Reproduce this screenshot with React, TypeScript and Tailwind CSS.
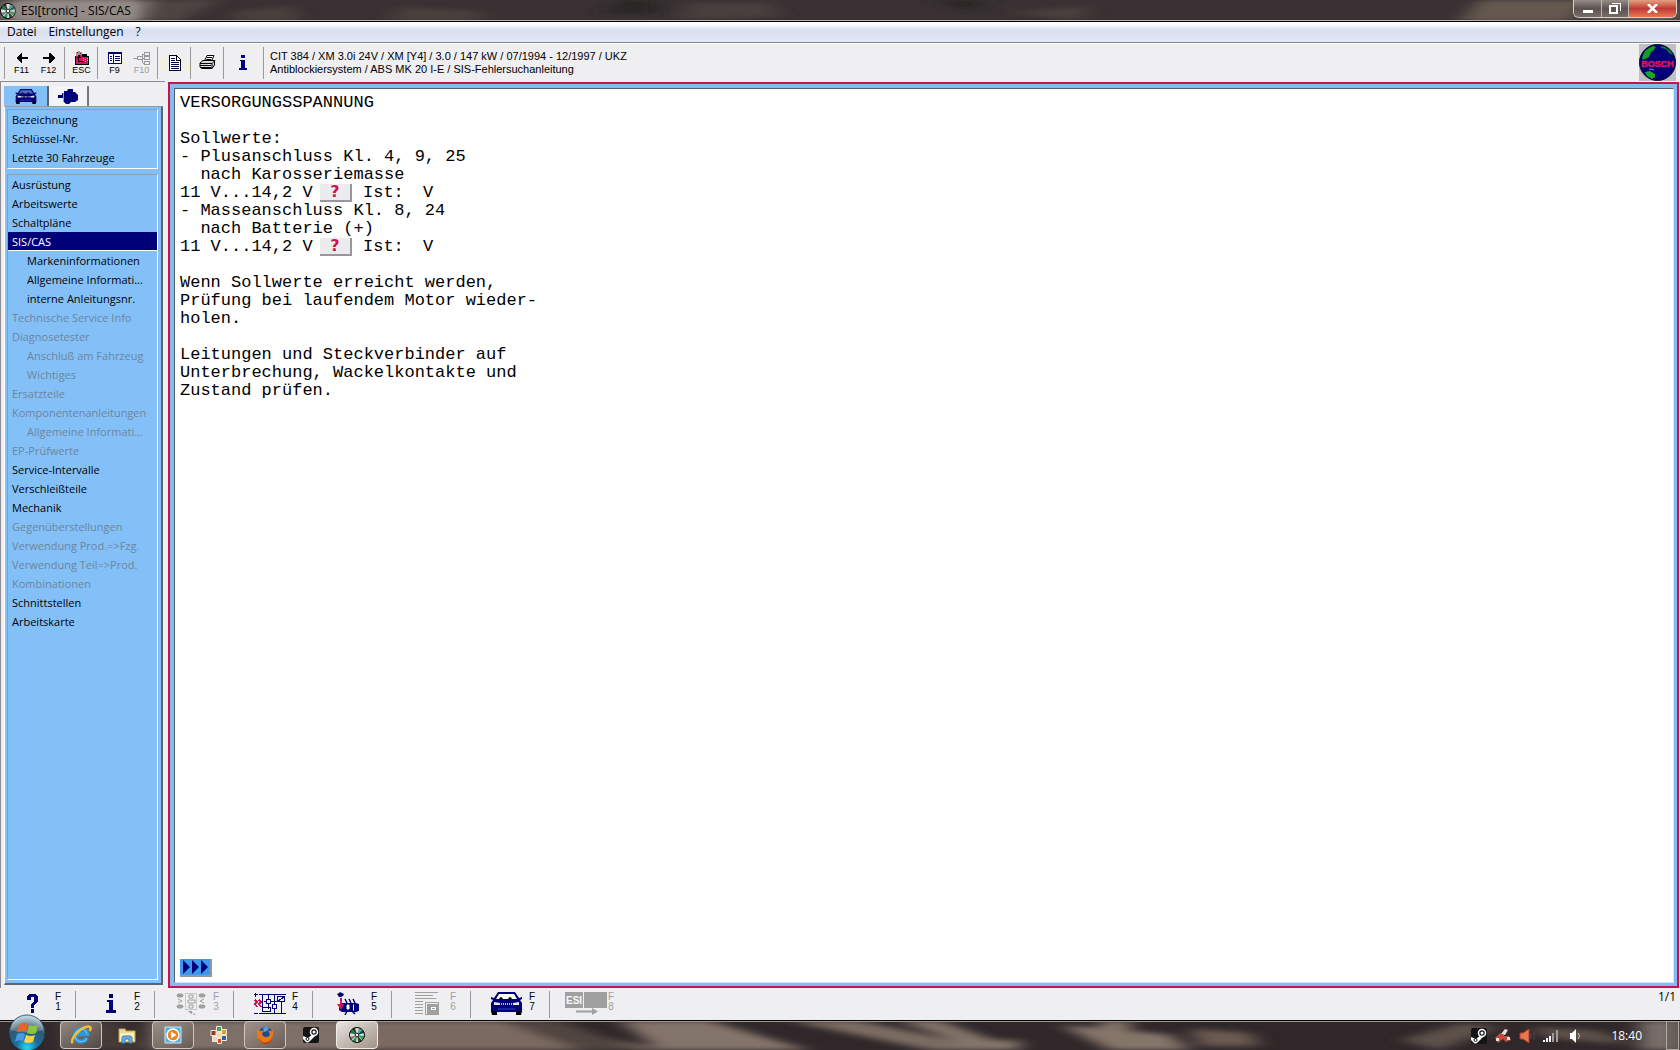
import React from 'react';

const UI_FONT = "font-['Open_Sans','Noto_Sans',sans-serif]";

type NavItem = { label: string; sub?: boolean; disabled?: boolean; active?: boolean };

const VEHICLE_ITEMS: NavItem[] = [
  { label: 'Bezeichnung' },
  { label: 'Schlüssel-Nr.' },
  { label: 'Letzte 30 Fahrzeuge' },
];

const INFO_ITEMS: NavItem[] = [
  { label: 'Ausrüstung' },
  { label: 'Arbeitswerte' },
  { label: 'Schaltpläne' },
  { label: 'SIS/CAS', active: true },
  { label: 'Markeninformationen', sub: true },
  { label: 'Allgemeine Informati...', sub: true },
  { label: 'interne Anleitungsnr.', sub: true },
  { label: 'Technische Service Info', disabled: true },
  { label: 'Diagnosetester', disabled: true },
  { label: 'Anschluß am Fahrzeug', sub: true, disabled: true },
  { label: 'Wichtiges', sub: true, disabled: true },
  { label: 'Ersatzteile', disabled: true },
  { label: 'Komponentenanleitungen', disabled: true },
  { label: 'Allgemeine Informati...', sub: true, disabled: true },
  { label: 'EP-Prüfwerte', disabled: true },
  { label: 'Service-Intervalle' },
  { label: 'Verschleißteile' },
  { label: 'Mechanik' },
  { label: 'Gegenüberstellungen', disabled: true },
  { label: 'Verwendung Prod.=>Fzg.', disabled: true },
  { label: 'Verwendung Teil=>Prod.', disabled: true },
  { label: 'Kombinationen', disabled: true },
  { label: 'Schnittstellen' },
  { label: 'Arbeitskarte' },
];

/* ---------- Icons ---------- */

const DiscIcon = () => (
  <svg width="16" height="16" viewBox="0 0 16 16">
    <circle cx="8" cy="8" r="7.5" fill="#e4e4dc" />
    <path d="M8 8 .8 6A7.500 7.500 0 0 1 3 2.400z" fill="#1a7a48" />
    <path d="M8 8 3 2.400A7.500 7.500 0 0 1 6 .8z" fill="#303838" />
    <path d="M8 8 10 .8A7.500 7.500 0 0 1 13.500 3z" fill="#48b070" />
    <path d="M8 8 13.500 3A7.500 7.500 0 0 1 15.200 6z" fill="#183c70" />
    <path d="M8 8 15.400 9A7.500 7.500 0 0 1 13.600 13z" fill="#28a860" />
    <path d="M8 8 13 13.600A7.500 7.500 0 0 1 9.500 15.300z" fill="#383838" />
    <path d="M8 8 7 15.400A7.500 7.500 0 0 1 3.500 14z" fill="#1c9450" />
    <path d="M8 8 2.600 13A7.500 7.500 0 0 1 .8 10z" fill="#787c80" />
    <circle cx="8" cy="8" r="7.500" fill="none" stroke="#000" />
    <circle cx="8" cy="8" r="1.800" fill="#fff" stroke="#222" />
  </svg>
);

const ArrowIcon = ({ flip = false }: { flip?: boolean }) => (
  <svg width="12" height="10" viewBox="0 0 12 10" shapeRendering="crispEdges" className={flip ? '-scale-x-100' : ''}>
    <path d="M0 5 5 0H6V4H12V6H6V10H5z" fill="#000" />
  </svg>
);

const EscIcon = () => (
  <svg width="16" height="15" viewBox="0 0 16 15" shapeRendering="crispEdges">
    <path d="M1 5h14v9H1z" fill="#000" />
    <path d="M2 4h6v2h6v7H2z" fill="#d01860" />
    <path d="M8 3h5v2H8z" fill="#000" />
    <path d="M2 1h2V0h2v1h2v3H6v2H4V5H2z" fill="#b09090" />
    <path d="M3 1h1v1H3zM6 2h1v1H6zM4 4h1v1H4z" fill="#401020" />
    <path d="M5 4h1v2h1v1H5v3h5v1H4V7H3V6h1V5h1z" fill="#000" />
    <path d="M9 7h1v1H9zM11 8h1v1h-1zM9 9h1v1H9zM11 10h1v1h-1zM13 7h1v1h-1zM13 9h1v1h-1z" fill="#f0a0c0" />
  </svg>
);

const ListIcon = () => (
  <svg width="14" height="12" viewBox="0 0 14 12" shapeRendering="crispEdges">
    <path d="M0 0h14v12H0z" fill="#000070" />
    <path d="M1 2h4v9H1zM6 2h7v9H6z" fill="#fff" />
    <path d="M2 4h2v1H2zM2 6h2v1H2zM2 8h2v1H2zM7 4h5v1H7zM7 6h5v1H7zM7 8h5v1H7z" fill="#000070" />
  </svg>
);

const TreeIcon = () => (
  <svg width="17" height="13" viewBox="0 0 17 13" shapeRendering="crispEdges" fill="none" stroke="#9a9a9a">
    <path d="M0 6.5h5M9 6.5h3M9.5 2v9M9.5 2H12M9.5 11H12" />
    <path d="M4.5 4.5h5v3h-5zM11.5.5h5v3h-5zM11.5 4.5h5v3h-5zM11.5 9.5h5v3h-5z" />
  </svg>
);

const DocIcon = () => (
  <svg width="12" height="16" viewBox="0 0 12 16" shapeRendering="crispEdges">
    <path d="M.5.5h7l4 4v11H.5z" fill="#fff" stroke="#000" />
    <path d="M7 0v5h5" fill="none" stroke="#000" />
    <path d="M2 3h4v1H2zM2 5h4v1H2zM2 7h8v1H2zM2 9h8v1H2zM2 11h8v1H2zM2 13h8v1H2z" fill="#000050" />
  </svg>
);

const PrinterIcon = () => (
  <svg width="17" height="15" viewBox="0 0 17 15">
    <path d="M5.5 6 8 .5h7L12.500 6" fill="#fff" stroke="#000" />
    <path d="M8 2.500h5M7.200 4.500h5" stroke="#000" />
    <path d="M1 8 4 5.500h11.500v4.500L13 13.500H2.500L1 12z" fill="#d8d8d8" stroke="#000" />
    <path d="M1 8.500h12l3-3M13 8.500v5" stroke="#000" fill="none" />
    <path d="M1 10.500h11M2 12.500h10" stroke="#000" />
    <path d="M9 9.500h2" stroke="#fff" />
  </svg>
);

const InfoIcon = ({ big = false }: { big?: boolean }) => (
  <svg width={big ? 11 : 9} height={big ? 19 : 15} viewBox="0 0 11 19" preserveAspectRatio="none" shapeRendering="crispEdges" fill="#000078">
    <path d="M3 0h4v4H3zM1 6h6v10h3v3H0v-3h3V8H1z" />
  </svg>
);

const QuestionIcon = () => (
  <svg width="11" height="19" viewBox="0 0 11 19" shapeRendering="crispEdges" fill="#000078">
    <path d="M2 0h7v1h1v1h1v6h-1v1H9v1H8v1H7v3H4v-4h1V9h1V8h1V3H4v3H0V2h1V1h1zM4 15h3v4H4z" />
  </svg>
);

const CarIcon = ({ large = false }: { large?: boolean }) => (
  <svg width={large ? 33 : 22} height={large ? 23 : 15} viewBox="0 0 33 23" preserveAspectRatio="none">
    <path d="M8 0h17l4 6 3-1v2l-2 1 2 3v9H1v-9l2-3-2-1V5l3 1z" fill="#000078" />
    <path d="M9 2h15l3 5H6z" fill={large ? '#fff' : '#4a70c0'} />
    <path d="M9 7q2-4 4 0M18 7q2-4 4 0" fill="#000" />
    <path d="M4 10l6 1v2H4zM29 10l-6 1v2h6z" fill="#e8e8d8" />
    <path d="M11 12h11" stroke="#fff" strokeWidth="1.500" strokeDasharray="1 1" />
    <path d="M8 17h17" stroke="#3048a8" />
    <path d="M1 19h6v4H2zM26 19h6l-1 4h-5z" fill="#000" />
  </svg>
);

const PlugIcon = () => (
  <svg width="20" height="15" viewBox="0 0 20 15">
    <path d="M0 6h4V4h2V2h3l1-2h5v3h2l3 3v5l-3 2h-4l-2 2H8l-2-2H5V9H0z" fill="#000078" />
    <path d="M5.500 4v9" stroke="#7da0e0" />
  </svg>
);

const DiagramIcon = () => (
  <svg width="30" height="22" viewBox="0 0 30 22" fill="#a0a0a0">
    <path d="M1 2l1-1h4l1 1v1l-1 1H2L1 3zM1 13l1-1h4l1 1v1l-1 1H2l-1-1zM23 2l1-1h4l1 1v1l-1 1h-4l-1-1zM23 13l1-1h4l1 1v1l-1 1h-4l-1-1z" stroke="#a0a0a0" />
    <path d="M2 6l4 2-4 2M28 6l-4 2 4 2" fill="none" stroke="#a0a0a0" />
    <path d="M9.500.5h11v16h-11z" fill="none" stroke="#a0a0a0" strokeDasharray="1 1" />
    <path d="M13 2h4v3h-4zM12 7h7v3h-7zM13 12h4v3h-4z" fill="none" stroke="#a0a0a0" />
    <path d="M12 18h4v3l-2-1zM16 19l4 3h-2z" />
  </svg>
);

const CircuitIcon = () => (
  <svg width="32" height="22" viewBox="0 0 32 22" shapeRendering="crispEdges" fill="none" stroke="#000078">
    <path d="M5 1.500h27M5 20.500h27M8.500 2v12M14.500 2v5M14.500 11v5M20.500 2v10M20.500 15v5M27.500 8v12M10 8.500h2M17 8.500h8" />
    <path d="M12.500 6.500h4v4h-4zM23.500 3.500h7v5h-7zM8.500 14.500h8v4h-8zM18.500 11.500h4v4h-4zM24 8l6-4" />
    <path d="M0 1.500h4M1.500 0v4M0 20.500h4" />
    <path d="M1 7l2 2-2 2 2 3M5 7l2 2-2 2 2 3" stroke="#c81450" strokeWidth="1.500" />
  </svg>
);

const SensorIcon = () => (
  <svg width="23" height="23" viewBox="0 0 23 23">
    <path d="M0 2l2-1 1-1 2 1 2 1-1 2-2 1H2z" fill="#000078" />
    <path d="M2 13l3-2h14l3 1v7l-3 1H5l-3-2z" fill="#000078" />
    <path d="M3 6h2v6h2l-3 6-4-6h3z" fill="#d0145a" />
    <path d="M10 13h2v4h-2zM16.500 12.500v6" fill="#fff" stroke="#fff" />
    <path d="M10 11 8 7M14 11l-2-4M18 11l-2-4M10 19l-2 4M15 19l3 3" stroke="#000078" strokeWidth="1.500" />
  </svg>
);

const TextBlockIcon = () => (
  <svg width="25" height="24" viewBox="0 0 25 24" shapeRendering="crispEdges" stroke="#a0a0a0" fill="none">
    <path d="M0 .5h23M0 3.500h18M0 6.500h21M0 9.500h8M0 12.500h8M0 15.500h8M0 18.500h8M0 21.500h8" />
    <path d="M10.500 10.500h13v12h-13z" />
    <path d="M12 12h11v9H12z" fill="#a0a0a0" />
    <path d="M16 15.500h4v2h-4z" stroke="#fff" />
  </svg>
);

const EsiIcon = () => (
  <svg width="42" height="23" viewBox="0 0 42 23" className="shrink-0">
    <path d="M0 0h42v16H0z" fill="#a0a0a0" />
    <text x="1" y="12" fontFamily="Liberation Sans, sans-serif" fontSize="10" fontWeight="700" fill="#f8f8f8">ESI</text>
    <path d="M18.500 0v16" stroke="#f0f0f0" />
    <path d="M11 18.500h16v-2.500l6 3.500-6 3.500v-2.500H11z" fill="#a0a0a0" />
  </svg>
);

const GlobeLogo = () => (
  <svg width="37" height="37" viewBox="0 0 37 37" className="bg-[#c0c0c4]">
    <circle cx="18.500" cy="18.500" r="18" fill="#000078" stroke="#101020" />
    <path d="M3 14Q5 5 14 2l3 1-3 4-2 1-2 5-6 3z" fill="#10a020" />
    <path d="M22 2q9 2 12 9l-4-2-3-4-5-1z" fill="#0a8030" />
    <path d="M6 28l5-1 5 3v3l-3 2-5-3z" fill="#18a828" />
    <path d="M10 25l5 1" stroke="#30b0e0" />
    <text x="18.500" y="23" textAnchor="middle" fontFamily="Liberation Sans, sans-serif" fontSize="9" fontWeight="700" fill="#d01860" stroke="#d01860" strokeWidth=".6">BOSCH</text>
  </svg>
);

const StartOrb = () => (
  <svg width="38" height="36" viewBox="0 0 38 36">
    <defs>
      <radialGradient id="orb" cx="50%" cy="90%" r="85%">
        <stop offset="0" stopColor="#20d8f8" />
        <stop offset=".35" stopColor="#1a6f9c" />
        <stop offset=".7" stopColor="#34566c" />
        <stop offset="1" stopColor="#a8c8d4" />
      </radialGradient>
    </defs>
    <circle cx="19" cy="19" r="18" fill="url(#orb)" stroke="#1c3644" />
    <path d="M3 16a16 16 0 0 1 32 0q-16 5-32 0z" fill="#fff" opacity=".22" />
    <path d="M11 11q4-4 9-1l-2 8q-4-2-9 0z" fill="#e8622c" />
    <path d="M21 11q4 2 9 0l-2 8q-4 2-9 0z" fill="#8cc43c" />
    <path d="M9 20q4-2 8 0l-2 7q-4-2-8 1z" fill="#4a9ae0" />
    <path d="M18 21q5 2 9 0l-2 7q-5 2-9 0z" fill="#fbd040" />
  </svg>
);

const IeIcon = () => (
  <svg width="24" height="20" viewBox="0 0 26 24" fill="none">
    <path d="M20 15.500A7.500 7.500 0 1 1 20.500 11H8" stroke="#2c98e0" strokeWidth="5" />
    <path d="M20 15.500A7.500 7.500 0 1 1 20.500 11" stroke="#8cd8ff" strokeWidth="1" />
    <path d="M3 22C-1 17 14 1 23 2c3 1 1 4 0 5" stroke="#f4c030" strokeWidth="3" />
  </svg>
);

const FolderIcon = () => (
  <svg width="18" height="17" viewBox="0 0 18 17">
    <path d="M1 2h6l1 2h9v11H1z" fill="#f0d890" stroke="#c8a850" />
    <path d="M2 6h14v8H2z" fill="#fbf0c0" />
    <path d="M4 16v-5q0-2 2-2h6q2 0 2 2v5h-3v-4H7v4z" fill="#68b0e4" stroke="#3880b8" />
  </svg>
);

const PlayerIcon = () => (
  <svg width="18" height="18" viewBox="0 0 18 18">
    <path d="M1 1h16v16H1z" fill="#5aaee0" stroke="#c8e8fc" />
    <circle cx="9" cy="9" r="6" fill="#f08020" stroke="#fff" strokeWidth="1.500" />
    <path d="M7 5.500 12.500 9 7 12.500z" fill="#fff" />
  </svg>
);

const TilesIcon = () => (
  <svg width="18" height="18" viewBox="0 0 18 18" stroke="#f0e8d8">
    <path d="M6.500.5h5v5h-5z" fill="#4c9c5c" />
    <path d="M1 4.500h5v5H1z" fill="#b03020" />
    <path d="M11.500 3.500h5v5h-5z" fill="#e0a030" />
    <path d="M6.500 6.500h5v5h-5z" fill="#f4dca0" />
    <path d="M2.500 10.500h5v5h-5z" fill="#e8d8c8" />
    <path d="M11.500 9.500h5v5h-5z" fill="#3060a0" />
    <path d="M7.500 12.500h4v5h-4z" fill="#d05030" />
  </svg>
);

const FoxIcon = () => (
  <svg width="18" height="18" viewBox="0 0 18 18">
    <circle cx="9.500" cy="8" r="7" fill="#1c4c90" />
    <path d="M7 2q3-2 6 0l-2 3-3 1z" fill="#58a0e0" />
    <path d="M1 3l3 2q2-1 4 0-1 2-2 2 0 4 4 4 3 0 4-2-1-3-2-5 4 2 5 0 1 13-8 13.500Q0 18 1 3z" fill="#e87818" />
    <path d="M2 11q3 6 8 5.500 5-1 6.500-6-1 8-7.500 7.500Q4 18 2 11z" fill="#c03c10" />
  </svg>
);

const SteamIcon = () => (
  <svg width="16" height="16" viewBox="0 0 16 16">
    <rect width="16" height="16" rx="2" fill="#141414" />
    <path d="M0 9l5 2 5-4 3 1-6 6q-3 3-5 0l-2-2z" fill="#fff" />
    <circle cx="11" cy="5" r="3.500" fill="#141414" stroke="#fff" strokeWidth="1.500" />
    <circle cx="11" cy="5" r="1.500" fill="#fff" />
    <circle cx="4.500" cy="12" r="1.500" fill="#fff" stroke="#141414" />
  </svg>
);

// Blurred desktop wallpaper behind the glass bars
const GlassTexture = ({ id }: { id: string }) => (
  <svg className="absolute inset-0 h-full w-full" viewBox="0 0 1680 30" preserveAspectRatio="none">
    <defs>
      <filter id={id} x="-10%" y="-50%" width="120%" height="200%">
        <feGaussianBlur stdDeviation="10 3" />
      </filter>
    </defs>
    {id === 'glass-top' ? (
      <g filter={`url(#${id})`}>
        <path d="M0 0h150v30H0z" fill="#857a74" />
        <path d="M150 0h70l-40 30h-40z" fill="#4e4442" />
        <path d="M230 18l60-10 10 22h-60z" fill="#4a413e" />
        <path d="M400 10l80 6v14h-90zM690 4h80l10 20-100 4zM1010 18l80-10-10 22z" fill="#4a403d" />
        <path d="M620 0h40v20h-60zM930 0h60l-20 18z" fill="#2c2628" />
        <path d="M1480 0h110l-20 30h-110z" fill="#65584f" />
        <path d="M1590 0h90v30h-90z" fill="#6d5c54" />
      </g>
    ) : (
      <g filter={`url(#${id})`}>
        <path d="M60 0h60l20 30H60z" fill="#443b38" />
        <path d="M150 0h230v30H150z" fill="#7d7068" />
        <path d="M370 0h140l160 30H370z" fill="#7a6b61" />
        <path d="M500 0h60l80 30h-60z" fill="#51453f" />
        <path d="M620 0h90l100 30H660z" fill="#84756a" />
        <path d="M790 0h70l140 30h-70z" fill="#7c6d62" />
        <path d="M900 0h40l60 22h-40zM1060 4l110 10 20 16h-80zM960 20h60v10h-60zM1100 0h30v12h-30z" fill="#85766a" />
        <path d="M1190 8l60 4 10 14h-60z" fill="#6a5a50" />
        <path d="M1400 20l60-18 40 4-60 24zM1530 6l70 4 30 14-80-6z" fill="#5d514a" />
        <path d="M1640 0h40v30h-40z" fill="#7a706a" />
      </g>
    )}
  </svg>
);

/* ---------- Parts ---------- */

const TitleBar: React.FC = () => (
  <header className="relative flex h-[22px] shrink-0 items-start justify-between overflow-hidden border-b border-black bg-[#393133]">
    <GlassTexture id="glass-top" />
    <div className="absolute inset-x-0 bottom-0 h-px bg-[#b8b0ac]" />
    <div className="relative flex h-[22px] items-center gap-[3px]">
      <DiscIcon />
      <h1 className="rounded-full bg-[#9c9692]/60 px-0.5 text-xs leading-4 text-black shadow-[0_0_8px_6px_rgba(156,150,146,0.6)]">
        ESI[tronic] - SIS/CAS
      </h1>
    </div>
    <div className="relative mr-[3px] flex h-[18px] overflow-hidden rounded-b-md border border-t-0 border-[#d8d0cc]">
      <button aria-label="Minimieren" className="flex w-7 items-end justify-center border-r border-[#c0b8b4] bg-linear-to-b from-[#988e88] via-[#5c5250] to-[#776c66] pb-1">
        <span className="h-[3px] w-2.5 bg-white" />
      </button>
      <button aria-label="Wiederherstellen" className="flex w-[27px] items-center justify-center border-r border-[#c0b8b4] bg-linear-to-b from-[#988e88] via-[#5c5250] to-[#776c66]">
        <svg width="12" height="11" viewBox="0 0 12 11" shapeRendering="crispEdges" fill="none" stroke="#fff">
          <path d="M3 .5h8.500V8" />
          <path d="M1 3h7v7H1z" strokeWidth="2" />
        </svg>
      </button>
      <button aria-label="Schließen" className="flex w-[47px] items-center justify-center bg-linear-to-b from-[#e0a080] via-[#c03838] to-[#e87850]">
        <svg width="11" height="9" viewBox="0 0 11 9" stroke="#fff" strokeWidth="2.500">
          <path d="M1 0l9 9M10 0 1 9" />
        </svg>
      </button>
    </div>
  </header>
);

const MenuBar: React.FC = () => (
  <nav className="flex h-[21px] shrink-0 items-center gap-3 border-b border-[#85858f] bg-linear-to-b from-white from-10% via-[#d9def0] via-40% to-[#e3e9f6] pl-[7px] text-xs leading-4">
    <button>Datei</button>
    <button>Einstellungen</button>
    <button>?</button>
  </nav>
);

const Divider = () => <div className="h-8 w-px shrink-0 bg-[#9a9a9e]" />;

type ToolProps = { label: string; caption?: string; disabled?: boolean; children: React.ReactNode };

const Tool = ({ label, caption, disabled, children }: ToolProps) => (
  <button
    aria-label={label}
    disabled={disabled}
    className="flex w-[27px] flex-col items-center justify-center font-['Liberation_Sans',sans-serif] text-[9px] leading-[9px] text-black disabled:text-[#9a9a9a]"
  >
    <span className="flex h-4 items-center">{children}</span>
    {caption && <span>{caption}</span>}
  </button>
);

const ToolGroup = ({ children }: { children: React.ReactNode }) => (
  <div className="flex h-8 pr-0.5 pl-[3px]">{children}</div>
);

const ToolBar: React.FC = () => (
  <div className="flex h-[38px] shrink-0 items-center border-t border-white bg-[#efeff2] pl-1">
    <Divider />
    <ToolGroup>
      <Tool label="Zurück" caption="F11"><ArrowIcon /></Tool>
      <Tool label="Vor" caption="F12"><ArrowIcon flip /></Tool>
    </ToolGroup>
    <Divider />
    <ToolGroup>
      <Tool label="Abbrechen" caption="ESC"><EscIcon /></Tool>
    </ToolGroup>
    <Divider />
    <ToolGroup>
      <Tool label="Liste" caption="F9"><ListIcon /></Tool>
      <Tool label="Baum" caption="F10" disabled><TreeIcon /></Tool>
    </ToolGroup>
    <Divider />
    <ToolGroup>
      <Tool label="Dokument"><DocIcon /></Tool>
    </ToolGroup>
    <Divider />
    <ToolGroup>
      <Tool label="Drucken"><PrinterIcon /></Tool>
    </ToolGroup>
    <Divider />
    <div className="flex h-8 px-1.5">
      <Tool label="Info"><InfoIcon /></Tool>
    </div>
    <Divider />
    <div className="ml-1.5 flex-1 font-['Liberation_Sans',sans-serif] text-[11px] leading-[13px] text-black">
      <p>CIT 384 / XM 3.0i 24V / XM [Y4] / 3.0 / 147 kW / 07/1994 - 12/1997 / UKZ</p>
      <p>Antiblockiersystem / ABS MK 20 I-E / SIS-Fehlersuchanleitung</p>
    </div>
    <div className="mr-1">
      <GlobeLogo />
    </div>
  </div>
);

const NavGroup = ({ items, grow = false }: { items: NavItem[]; grow?: boolean }) => (
  <ul className={`border border-t-[#8aa0b4] border-l-[#8aa0b4] border-r-white border-b-white ${grow ? 'flex-1' : 'pb-px'}`}>
    {items.map((item, i) => (
      <li key={i}>
        <button
          disabled={item.disabled}
          className={`block h-[19px] w-full text-left text-[11px] leading-[19px] whitespace-nowrap disabled:text-[#6c859c] ${item.sub ? 'pl-[19px]' : 'pl-1'} ${
            item.active ? 'border-b border-white bg-[#000078] text-white' : 'text-black'
          }`}
        >
          {item.label}
        </button>
      </li>
    ))}
  </ul>
);

const SideBar: React.FC = () => (
  <aside className="flex w-[165px] shrink-0 flex-col border-t border-l border-[#8c8c90] pt-1 pr-0.5 pb-[3px] pl-[3px]">
    <div className="flex h-5" role="tablist">
      <button role="tab" aria-selected aria-label="Fahrzeug" className="flex w-[45px] items-center justify-center border-r-2 border-[#606068] bg-[#84c0f8]">
        <CarIcon />
      </button>
      <button role="tab" aria-selected={false} aria-label="Produkt" className="flex w-10 items-center justify-center border-r-2 border-[#77777c] bg-[#f4f4f6]">
        <PlugIcon />
      </button>
    </div>
    <nav className="flex flex-1 flex-col gap-[5px] border-r-2 border-b-2 border-t border-l border-t-[#8a9cae] border-l-white border-r-[#5c6470] border-b-[#5c6470] bg-[#84c0f8] pt-[2px] pr-[3px] pb-[3px] pl-[2px]">
      <NavGroup items={VEHICLE_ITEMS} />
      <NavGroup items={INFO_ITEMS} grow />
    </nav>
  </aside>
);

const MeasureRow = () => (
  <div className="flex h-[18px] items-center">
    <span className="w-[140px]">11 V...14,2 V</span>
    <button
      aria-label="Istwert messen"
      className="mr-[11px] h-[18px] w-8 border-r-2 border-b-2 border-[#98989c] bg-[#ececef] font-['DejaVu_Sans',sans-serif] text-base leading-4 font-bold text-[#d0144c]"
    >
      ?
    </button>
    <span className="w-[60px]">Ist:</span>
    <span>V</span>
  </div>
);

const Content: React.FC = () => (
  <main className="mt-px mr-px ml-[3px] flex flex-1 border-2 border-[#c8144c] bg-[#84bcf0] pt-1 pr-[3px] pb-[3px] pl-1">
    <div className="flex flex-1 flex-col justify-between border border-t-[#50606c] border-l-[#50606c] border-r-[#d8e4f4] border-b-[#d8e4f4] bg-white pt-[5px] pr-1 pb-[5px] pl-[5px]">
      <div className="font-['Liberation_Mono','Courier_New',monospace] text-[17px] leading-[18px] whitespace-pre text-black">
        <h2>VERSORGUNGSSPANNUNG</h2>
        <p className="mt-[18px]">Sollwerte:</p>
        <p>{'- Plusanschluss Kl. 4, 9, 25\n  nach Karosseriemasse'}</p>
        <MeasureRow />
        <p>{'- Masseanschluss Kl. 8, 24\n  nach Batterie (+)'}</p>
        <MeasureRow />
        <p className="mt-[18px]">{'Wenn Sollwerte erreicht werden,\nPrüfung bei laufendem Motor wieder-\nholen.'}</p>
        <p className="mt-[18px]">{'Leitungen und Steckverbinder auf\nUnterbrechung, Wackelkontakte und\nZustand prüfen.'}</p>
      </div>
      <button aria-label="Weiter" className="flex h-[18px] w-8 items-center justify-center border-r-2 border-b-2 border-[#98989c] bg-[#3c98f0]">
        <svg width="27" height="14" viewBox="0 0 27 14" fill="#000078">
          <path d="M1 0l7 7-7 7zM10 0l7 7-7 7zM19 0l7 7-7 7z" />
        </svg>
      </button>
    </div>
  </main>
);

const FUNCTION_KEYS = [
  { n: 1, label: 'Hilfe', icon: <QuestionIcon /> },
  { n: 2, label: 'Information', icon: <InfoIcon big /> },
  { n: 3, label: 'Übersicht', icon: <DiagramIcon />, disabled: true },
  { n: 4, label: 'Schaltplan', icon: <CircuitIcon /> },
  { n: 5, label: 'Einbauort', icon: <SensorIcon /> },
  { n: 6, label: 'Text', icon: <TextBlockIcon />, disabled: true },
  { n: 7, label: 'Fahrzeug', icon: <CarIcon large /> },
  { n: 8, label: 'ESI', icon: <EsiIcon />, disabled: true },
];

const FunctionBar: React.FC = () => (
  <footer className="flex h-8 shrink-0 items-start justify-between bg-[#efeff2] pt-[3px] pr-1">
    <div className="flex">
      {FUNCTION_KEYS.map((key) => (
        <button
          key={key.n}
          aria-label={`F${key.n} ${key.label}`}
          disabled={key.disabled}
          className="flex h-[27px] w-[79px] border-r border-[#9a9a9e] pl-3.5 font-['Liberation_Sans',sans-serif] text-[10px] leading-[10px] text-black first:w-[76px] first:pl-[11px] last:border-r-0 disabled:text-[#a0a0a0]"
        >
          <span className="flex h-[25px] w-[43px] items-center justify-center">{key.icon}</span>
          <span className="w-2 pt-px">F<br />{key.n}</span>
        </button>
      ))}
    </div>
    <span className="text-xs leading-3 text-black">1/1</span>
  </footer>
);

const TASKS = [
  { label: 'Internet Explorer', icon: <IeIcon />, open: true },
  { label: 'Windows-Explorer', icon: <FolderIcon /> },
  { label: 'Media Player', icon: <PlayerIcon />, open: true },
  { label: 'Galerie', icon: <TilesIcon /> },
  { label: 'Firefox', icon: <FoxIcon />, open: true },
  { label: 'Steam', icon: <SteamIcon /> },
  { label: 'ESI[tronic]', icon: <DiscIcon />, open: true, active: true },
];

const TaskBar: React.FC = () => (
  <div className="relative flex h-[30px] shrink-0 items-stretch justify-between border-t border-black bg-[#2f2729]">
    <GlassTexture id="glass-bottom" />
    <div className="absolute inset-x-0 top-0 h-px bg-[#a09690]" />
    <div className="relative flex pl-[58px]">
      <button aria-label="Start" className="absolute bottom-0 left-2">
        <StartOrb />
      </button>
      {TASKS.map((task) => (
        <div key={task.label} className="flex w-[46px] justify-center pb-px">
          <button
            aria-label={task.label}
            className={`flex w-[42px] items-center justify-center rounded-sm ${
              task.active
                ? 'border border-[#f0ece8] bg-linear-to-br from-[#e8e4e0] to-[#a09488]'
                : task.open
                  ? 'border border-[#d0c8c0] bg-linear-to-br from-[#a89c94]/80 to-[#5c504a]/60'
                  : ''
            }`}
          >
            {task.icon}
          </button>
        </div>
      ))}
    </div>
    <div className="relative flex items-center">
      <div className="mr-7 flex items-center gap-2">
        <SteamIcon />
        <svg width="16" height="14" viewBox="0 0 16 14">
          <path d="M6 5l4-5 3 1-3 5z" fill="#e8e0d8" />
          <path d="M0 9l5-5 4 3 5 0 2 4-5 2-3-3-5 4z" fill="#b85040" />
          <path d="M5 6h4v4H5z" fill="#e04030" />
          <path d="M1 9h3v3H1zM12 8h3v3h-3z" fill="#e8e0c8" />
        </svg>
        <svg width="16" height="14" viewBox="0 0 16 14">
          <path d="M1 4h3l6-4v14l-6-4H1z" fill="#e87850" stroke="#b04028" />
          <path d="M12 4v6M15 3v8" stroke="#5c4050" />
        </svg>
        <svg width="16" height="12" viewBox="0 0 16 12" shapeRendering="crispEdges" fill="#fff">
          <path d="M0 10h2v2H0zM3 8h2v4H3zM6 6h2v6H6z" />
          <path d="M9 3h2v9H9zM13 0h2v12h-2z" fill="#a09a98" />
        </svg>
        <svg width="16" height="14" viewBox="0 0 16 14">
          <path d="M3 4h2l4-4v14l-4-4H3z" fill="#fff" />
          <path d="M11 4q3 3 0 6" stroke="#d0c8c4" fill="none" />
        </svg>
      </div>
      <time className="mr-6 text-xs leading-4 text-white">18:40</time>
      <button aria-label="Desktop anzeigen" className="mr-px h-full w-[13px] border border-[#b0a8a2] bg-[#6b605a]/60" />
    </div>
  </div>
);

const App: React.FC = () => {
  return (
    <div className={`flex h-screen flex-col overflow-hidden bg-[#efeff2] ${UI_FONT}`}>
      <TitleBar />
      <MenuBar />
      <ToolBar />
      <div className="flex min-h-0 flex-1">
        <SideBar />
        <Content />
      </div>
      <FunctionBar />
      <TaskBar />
    </div>
  );
};

export default App;
